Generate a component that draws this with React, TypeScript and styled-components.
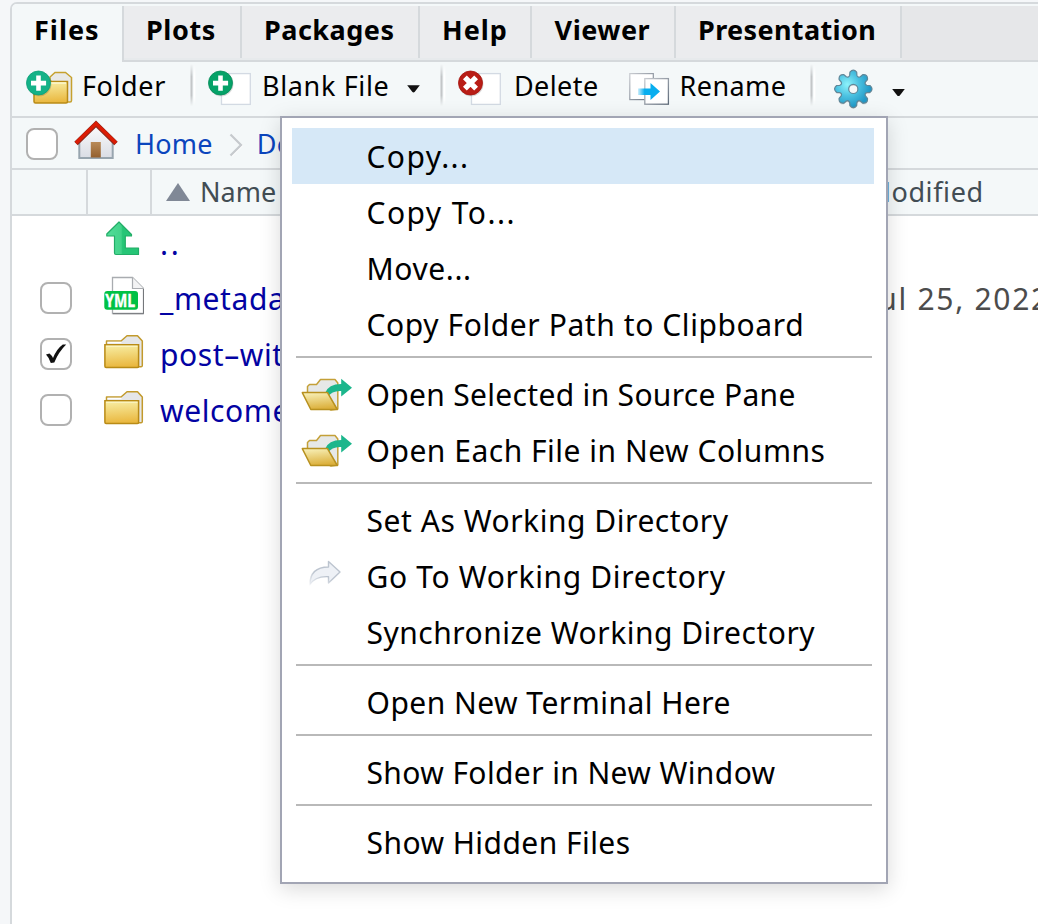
import React from 'react';
import styled, { createGlobalStyle } from 'styled-components';

const Global = createGlobalStyle`
  * { box-sizing: border-box; }
  html, body { margin: 0; padding: 0; overflow: hidden; background: #f5f7f9; }
  body { font-family: 'Noto Sans', 'Open Sans', sans-serif; color: #000; }
  svg { display: block; flex: none; }
`;

const line = '#d5d9dc';
const surface = '#f4f8f9';

const Page = styled.div`
  position: relative;
  width: 1038px;
  height: 924px;
  overflow: hidden;
  padding: 2px 0 0 10px;
`;

const Panel = styled.section`
  width: 1060px;
  height: 940px;
  background: #fff;
  border: 2px solid ${line};
  border-radius: 7px 0 0 0;
  overflow: hidden;
`;

const TabBar = styled.nav`
  display: flex;
  height: 58px;
  background: ${surface};
`;

const Tab = styled.div<{ $w: number; $pad?: number; $track: number; $active?: boolean }>`
  flex: none;
  width: ${p => p.$w}px;
  height: ${p => (p.$active ? 58 : 56)}px;
  margin-top: ${p => (p.$active ? 0 : 2)}px;
  padding-top: ${p => (p.$active ? 2 : 0)}px;
  padding-left: ${p => p.$pad ?? 22}px;
  font-size: 27px;
  font-weight: 700;
  line-height: 47px;
  white-space: nowrap;
  letter-spacing: ${p => p.$track}px;
  background: ${p => (p.$active ? surface : `linear-gradient(#ebecee 52px, #e7eaec 52px, #e7eaec 54px, ${line} 54px)`)};
`;

const TabDivider = styled.div<{ $full?: boolean }>`
  flex: none;
  width: 2px;
  height: 56px;
  margin-top: 2px;
  background: ${p => (p.$full ? line : `linear-gradient(${line} 52px, #e7eaec 52px, #e7eaec 54px, ${line} 54px)`)};
`;

const TabFill = styled.div`
  flex: 1;
  height: 56px;
  margin-top: 2px;
  background: #e6e7e9;
  border-bottom: 2px solid ${line};
`;

const Toolbar = styled.div`
  display: flex;
  height: 56px;
  padding-left: 14px;
  background: ${surface};
  border-bottom: 2px solid ${line};
`;

const ToolButton = styled.div<{ $w: number; $gap: number }>`
  flex: none;
  display: flex;
  width: ${p => p.$w}px;
  gap: ${p => p.$gap}px;
  svg { margin-top: 4px; }
`;

const ToolLabel = styled.span<{ $track: number; $w?: number }>`
  font-size: 27px;
  line-height: 47px;
  white-space: nowrap;
  letter-spacing: ${p => p.$track}px;
  width: ${p => (p.$w ? `${p.$w}px` : 'auto')};
`;

const GearSlot = styled.span`
  padding-left: 6px;
`;

const ToolDivider = styled.div`
  flex: none;
  width: 6px;
  height: 42px;
  margin: 2px 12px 0 0;
  background: linear-gradient(90deg, #d9dcde 0 1px, #c3c6c8 1px 2px, #d9dcde 2px 3px, #f6f9fa 3px 4px, #fff 4px 5px, #f8fafb 5px 6px);
  mask-image: linear-gradient(transparent, #000 30%, #000 75%, transparent);
`;

const Crumbs = styled.div`
  display: flex;
  align-items: center;
  height: 52px;
  padding: 2px 0 0 14px;
  background: ${surface};
  border-bottom: 2px solid ${line};
`;

const Box = styled.span`
  flex: none;
  display: flex;
  align-items: center;
  justify-content: center;
  width: 32px;
  height: 32px;
  border: 2px solid #b1b1b1;
  border-radius: 8px;
  background: #fff;
`;

const HomeSlot = styled.span`
  width: 44px;
  margin: -6px 17px 0 16px;
`;

const Crumb = styled.span`
  font-size: 27px;
  color: #0b45bd;
  letter-spacing: 0.25px;
  line-height: 50px;
`;

const ChevronSlot = styled.span`
  margin: 2px 13px 0 16px;
`;

const Header = styled.div`
  display: flex;
  height: 46px;
  background: ${surface};
  border-bottom: 2px solid ${line};
  color: #424d54;
  font-size: 27px;
  line-height: 44px;
`;

const HeadCell = styled.div<{ $w: number; $line?: boolean }>`
  flex: none;
  display: flex;
  align-items: center;
  width: ${p => p.$w}px;
  border-right: ${p => (p.$line ? `2px solid ${line}` : 'none')};
`;

const SortSlot = styled.span`
  margin: 0 10px 0 14px;
`;

const Modified = styled.span`
  letter-spacing: 0.6px;
`;

const FileRow = styled.div<{ $h?: number }>`
  display: flex;
  align-items: center;
  height: ${p => p.$h ?? 56}px;
  padding-left: 28px;
  font-size: 30px;
  line-height: 54px;
  white-space: nowrap;
`;

const CheckSlot = styled.span`
  flex: none;
  width: 64px;
`;

const IconSlot = styled.span<{ $lift?: number }>`
  flex: none;
  width: 56px;
  padding-bottom: ${p => p.$lift ?? 4}px;
`;

const FileName = styled.span<{ $track?: number }>`
  flex: none;
  width: 708.4px;
  padding-top: 2px;
  color: #0303a3;
  letter-spacing: ${p => p.$track ?? 0.6}px;
`;

const FileDate = styled.span`
  padding-top: 2px;
  color: #4c4c4c;
  letter-spacing: 1.7px;
`;

const Menu = styled.div`
  position: absolute;
  left: 280px;
  top: 116px;
  width: 608px;
  height: 768px;
  padding: 10px 12px 12px 10px;
  background: #fff;
  border: 2px solid #a2a5b4;
  box-shadow: 0 5px 20px rgba(0, 0, 0, 0.15);
`;

const MenuRow = styled.div<{ $on?: boolean; $track: number }>`
  display: flex;
  align-items: center;
  height: 56px;
  padding-top: 2px;
  background: ${p => (p.$on ? '#d6e8f7' : 'transparent')};
  font-size: 30px;
  line-height: 54px;
  white-space: nowrap;
  letter-spacing: ${p => p.$track}px;
`;

const MenuIcon = styled.span`
  flex: none;
  width: 74.5px;
  padding-left: 9px;
`;

const Rule = styled.hr`
  height: 2px;
  margin: 4px 2px 8px 4px;
  border: 0;
  background: #b9b9b9;
`;

const Defs = styled.svg`
  position: absolute;
`;

const Gradients = () => (
  <Defs width="0" height="0">
    <defs>
      <linearGradient id="gold" x1="0" y1="0" x2="0.1" y2="1">
        <stop offset="0" stopColor="#f8efa6" />
        <stop offset="1" stopColor="#eab840" />
      </linearGradient>
      <linearGradient id="goldOpen" x1="0" y1="0" x2="0.2" y2="1">
        <stop offset="0" stopColor="#f9f3bd" />
        <stop offset="1" stopColor="#dcb13e" />
      </linearGradient>
      <linearGradient id="wall" x1="0" y1="0" x2="0" y2="1">
        <stop offset="0" stopColor="#fafafb" />
        <stop offset="1" stopColor="#d9dce4" />
      </linearGradient>
      <linearGradient id="door" x1="0" y1="0" x2="0" y2="1">
        <stop offset="0" stopColor="#b98a58" />
        <stop offset="1" stopColor="#94602f" />
      </linearGradient>
      <linearGradient id="up" x1="0" y1="0" x2="1" y2="0">
        <stop offset="0" stopColor="#52dd9a" />
        <stop offset="0.45" stopColor="#43d38a" />
        <stop offset="0.5" stopColor="#26c576" />
        <stop offset="1" stopColor="#26c576" />
      </linearGradient>
      <linearGradient id="sheet" x1="0" y1="0" x2="1" y2="1">
        <stop offset="0" stopColor="#c9ccd1" />
        <stop offset="1" stopColor="#5f6b7a" />
      </linearGradient>
      <linearGradient id="blueArrow" x1="0" y1="0" x2="1" y2="0">
        <stop offset="0" stopColor="#08aeef" stopOpacity="0.2" />
        <stop offset="0.3" stopColor="#08aeef" />
      </linearGradient>
      <radialGradient id="gear" cx="0.34" cy="0.38" r="0.62">
        <stop offset="0" stopColor="#8df3fb" />
        <stop offset="0.5" stopColor="#4cc2e1" />
        <stop offset="1" stopColor="#2298c6" />
      </radialGradient>
      <linearGradient id="ghost" x1="0" y1="1" x2="0.5" y2="0">
        <stop offset="0" stopColor="#c3cad4" stopOpacity="0.1" />
        <stop offset="0.5" stopColor="#bcc4cf" />
      </linearGradient>
    </defs>
  </Defs>
);

const Plus = ({ color, edge }: { color: string; edge: string }) => (
  <g>
    <circle cx="13.2" cy="18" r="12.3" fill="#000" opacity="0.14" />
    <circle cx="12.5" cy="17" r="12" fill={color} stroke={edge} strokeWidth="0.8" />
    <path d="M10.2 9.5h4.6v5.3h5.3v4.6h-5.3v5.3h-4.6v-5.3H5v-4.6h5.2z" fill="#fff" />
  </g>
);

const NewFolderIcon = () => (
  <svg width="47" height="44" viewBox="0 0 47 44">
    <path d="M24 14V11l5-4.500h10.500l6 5V34.500q0 1.500-1.500 1.500h-3z" fill="#e8e9e8" stroke="#c6a12f" strokeWidth="1.500" />
    <path d="M8 15.500H41.500V35.500q0 1.500-1.500 1.500H9.500Q8 37 8 35.500z" fill="url(#gold)" stroke="#b98b16" strokeWidth="1.500" />
    <path d="M10 17h30" stroke="#fcf8d0" strokeWidth="1.300" />
    <Plus color="#14b288" edge="#0da077" />
  </svg>
);

const Sheet = () => <rect x="13.500" y="7.600" width="28.800" height="30.800" fill="#fff" stroke="#d3dae3" strokeWidth="1.300" />;

const NewFileIcon = () => (
  <svg width="43" height="44" viewBox="0 0 43 44">
    <Sheet />
    <Plus color="#05a268" edge="#068c59" />
  </svg>
);

const DeleteIcon = () => (
  <svg width="43" height="44" viewBox="0 0 43 44">
    <Sheet />
    <circle cx="13.200" cy="18" r="12.300" fill="#000" opacity="0.140" />
    <circle cx="12.500" cy="17" r="12" fill="#b91d16" stroke="#a6150f" strokeWidth="0.800" />
    <path d="M6.900 11.400l11.200 11.200M18.100 11.400L6.900 22.600" stroke="#fff" strokeWidth="5.400" />
  </svg>
);

const RenameIcon = () => (
  <svg width="41" height="44" viewBox="0 0 41 44">
    <rect x="0.800" y="7.600" width="23.500" height="26" fill="#fff" stroke="url(#sheet)" strokeWidth="1.200" />
    <rect x="15.800" y="12.600" width="23.600" height="25.600" fill="#fff" stroke="url(#sheet)" strokeWidth="1.300" />
    <path d="M9 22.500h12.500v-5.500L31 25.500l-9.500 8.500v-5H9z" fill="url(#blueArrow)" />
  </svg>
);

const gearPath = (() => {
  const pts: string[] = [];
  const at = (r: number, deg: number) => {
    const a = (deg * Math.PI) / 180;
    return `${(20 + r * Math.cos(a)).toFixed(2)} ${(20 + r * Math.sin(a)).toFixed(2)}`;
  };
  for (let i = 0; i < 8; i++) {
    const d = i * 45 - 90;
    pts.push(`${i ? 'L' : 'M'}${at(14, d - 15)} L${at(17, d - 11.500)} Q${at(20.800, d)} ${at(17, d + 11.500)} L${at(14, d + 15)} Q${at(12, d + 22.500)} ${at(14, d + 30)}`);
  }
  return `${pts.join(' ')}Z M24.600 20a4.600 4.600 0 1 0-9.200 0a4.600 4.600 0 1 0 9.200 0Z`;
})();

const GearIcon = () => (
  <svg width="40" height="44" viewBox="0 0 40 44">
    <g transform="translate(-0.700 2.900)">
      <path d={gearPath} transform="translate(0 1.200)" fill="#000" opacity="0.200" fillRule="evenodd" />
      <path d={gearPath} fill="url(#gear)" fillRule="evenodd" stroke="#5f8799" strokeWidth="1.200" strokeLinejoin="round" />
    </g>
  </svg>
);

const Caret = ({ top }: { top: number }) => (
  <svg width="13" height="44" viewBox="0 0 13 44">
    <path d={`M0.200 ${top}h12.600l-5 6.500q-1.300 1.200-2.600 0z`} fill="#111" />
  </svg>
);

const HomeIcon = () => (
  <svg width="44" height="42" viewBox="0 0 44 42">
    <path d="M5 22L22 6l17 16v17H5z" fill="url(#wall)" />
    <path d="M5.300 22v16h33.400V22" fill="none" stroke="#98a5af" strokeWidth="2" />
    <path d="M16.800 37.500V22h10v15.500z" fill="url(#door)" />
    <path d="M2 23.500L22 4l20 19.500" fill="none" stroke="#8d2a1c" strokeWidth="5" />
    <path d="M2 23L22 3.500L42 23" fill="none" stroke="#dc1c05" strokeWidth="3.400" />
  </svg>
);

const ChevronIcon = () => (
  <svg width="15" height="26" viewBox="0 0 15 26">
    <path d="M2.500 3.500l10 10-10 10" fill="none" stroke="#fff" strokeWidth="2.500" />
    <path d="M1.500 2.500L12 13 1.500 23.500" fill="none" stroke="#c6cace" strokeWidth="2.300" />
  </svg>
);

const UpIcon = () => (
  <svg width="40" height="38" viewBox="0 0 40 38">
    <path d="M15 2L27.500 14.500V16H21.300v12H34.500v6.500H12q-1.500 0-1.500-1.500V16H2.800v-2z" fill="url(#up)" stroke="#22ad67" strokeWidth="1.200" strokeLinejoin="round" />
  </svg>
);

const YmlLabel = styled.text`
  font-family: 'Open Sans', 'Noto Sans', sans-serif;
  font-size: 18px;
  font-weight: 700;
  letter-spacing: 0;
`;

const YmlIcon = () => (
  <svg width="40" height="42" viewBox="0 0 40 42">
    <path d="M8.500 2.500h20l11 11v25h-31z" fill="#fff" stroke="#a9acb0" strokeWidth="1.300" />
    <path d="M28.500 2.500v11h11" fill="#f3f3f4" stroke="#a9acb0" strokeWidth="1.200" />
    <path d="M9 38.700h30.500V14" fill="none" stroke="#74777b" strokeWidth="1" />
    <rect x="0.300" y="16" width="33.700" height="18.800" rx="3" fill="#00c144" />
    <YmlLabel x="1.200" y="31.600" textLength="30" lengthAdjust="spacingAndGlyphs" fill="#fff" stroke="#fff" strokeWidth="0.400">YML</YmlLabel>
  </svg>
);

const FolderIcon = () => (
  <svg width="40" height="42" viewBox="0 0 40 42">
    <path d="M2.500 16V10H17l6-5.200h10.500L38.300 10v24.500q0 1.300-1.300 1.300H30z" fill="#e5e6e8" stroke="#c29a2c" strokeWidth="1.500" strokeLinejoin="round" />
    <path d="M3.500 11.500h14" stroke="#fff" strokeWidth="1.500" />
    <path d="M0.900 13.800h33.700v21.400q0 1.200-1.200 1.200H2.100q-1.200 0-1.200-1.200z" fill="url(#gold)" stroke="#b98b16" strokeWidth="1.500" />
    <path d="M2 15.200h31.500" stroke="#fcf8d0" strokeWidth="1" />
  </svg>
);

const TickIcon = () => (
  <svg width="24" height="24" viewBox="0 0 24 24">
    <path d="M2 12.500l3.500-1q2.500 2 3.500 4.500Q12.500 7 18.800 2.500h3.400Q14.500 10 10.300 20.500l-3.500.5Q5 15.500 2 12.500z" fill="#111" />
  </svg>
);

const OpenFolderIcon = () => (
  <svg width="52" height="36" viewBox="0 0 52 36">
    <path d="M6.500 19V9.500L8.500 7.500h7l4-5h14.500l2.800 3.500V32L30 33z" fill="#e6e8e7" stroke="#c4a038" strokeWidth="1.500" strokeLinejoin="round" />
    <path d="M24 16Q27.500 7 40.200 7V1.800L51 10.800l-10.800 8.700V14Q31 13.500 26.500 20z" fill="#1cb68c" />
    <path d="M1.300 15.600h25.200l9.800 16.900H9.800z" fill="url(#goldOpen)" stroke="#b8911f" strokeWidth="1.500" strokeLinejoin="round" />
  </svg>
);

const GoToIcon = () => (
  <svg width="52" height="38" viewBox="0 0 52 38">
    <path d="M8.800 27Q9 9 27.500 9V3.500L39 14 27.500 25V18.700Q14 18 8.800 27z" fill="#eef1f6" stroke="url(#ghost)" strokeWidth="1.400" strokeLinejoin="round" />
  </svg>
);

type Entry = { text: string; track: number; icon?: React.ReactNode };

const groups: Entry[][] = [
  [
    { text: 'Copy...', track: 1.4 },
    { text: 'Copy To...', track: 1.45 },
    { text: 'Move...', track: 0.6 },
    { text: 'Copy Folder Path to Clipboard', track: 0.59 },
  ],
  [
    { text: 'Open Selected in Source Pane', track: 0.32, icon: <OpenFolderIcon /> },
    { text: 'Open Each File in New Columns', track: 0.51, icon: <OpenFolderIcon /> },
  ],
  [
    { text: 'Set As Working Directory', track: 0.54 },
    { text: 'Go To Working Directory', track: 0.65, icon: <GoToIcon /> },
    { text: 'Synchronize Working Directory', track: 0.5 },
  ],
  [{ text: 'Open New Terminal Here', track: 0.47 }],
  [{ text: 'Show Folder in New Window', track: 0.39 }],
  [{ text: 'Show Hidden Files', track: 0.45 }],
];

export default function App() {
  return (
    <Page>
      <Global />
      <Gradients />
      <Panel>
        <TabBar>
          <Tab $active $w={110} $pad={22} $track={1}>Files</Tab>
          <TabDivider $full />
          <Tab $w={116} $track={0.6}>Plots</Tab>
          <TabDivider />
          <Tab $w={176} $track={0.5}>Packages</Tab>
          <TabDivider />
          <Tab $w={110} $track={1}>Help</Tab>
          <TabDivider />
          <Tab $w={142} $pad={22.6} $track={0.5}>Viewer</Tab>
          <TabDivider />
          <Tab $w={224} $track={0.37}>Presentation</Tab>
          <TabDivider />
          <TabFill />
        </TabBar>
        <Toolbar>
          <ToolButton $w={164} $gap={9}>
            <NewFolderIcon />
            <ToolLabel $track={0.6}>Folder</ToolLabel>
          </ToolButton>
          <ToolDivider />
          <ToolButton $w={232} $gap={11}>
            <NewFileIcon />
            <ToolLabel $track={0.65} $w={134}>Blank File</ToolLabel>
            <Caret top={19.3} />
          </ToolButton>
          <ToolDivider />
          <ToolButton $w={171} $gap={13}>
            <DeleteIcon />
            <ToolLabel $track={0.4}>Delete</ToolLabel>
          </ToolButton>
          <ToolButton $w={181} $gap={9.6}>
            <RenameIcon />
            <ToolLabel $track={0.4}>Rename</ToolLabel>
          </ToolButton>
          <ToolDivider />
          <ToolButton $w={90} $gap={17.5}>
            <GearSlot><GearIcon /></GearSlot>
            <Caret top={23} />
          </ToolButton>
        </Toolbar>
        <Crumbs>
          <Box />
          <HomeSlot><HomeIcon /></HomeSlot>
          <Crumb>Home</Crumb>
          <ChevronSlot><ChevronIcon /></ChevronSlot>
          <Crumb>Docs</Crumb>
        </Crumbs>
        <Header>
          <HeadCell $w={76} $line />
          <HeadCell $w={64} $line />
          <HeadCell $w={714.4}>
            <SortSlot>
              <svg width="24" height="18" viewBox="0 0 24 18"><path d="M12 0l12 18H0z" fill="#808896" /></svg>
            </SortSlot>
            Name
          </HeadCell>
          <HeadCell $w={180}><Modified>Modified</Modified></HeadCell>
        </Header>
        <FileRow $h={54}>
          <CheckSlot />
          <IconSlot $lift={8}><UpIcon /></IconSlot>
          <FileName $track={2.6}>..</FileName>
        </FileRow>
        <FileRow>
          <CheckSlot><Box /></CheckSlot>
          <IconSlot><YmlIcon /></IconSlot>
          <FileName>_metadata.yml</FileName>
          <FileDate>Jul 25, 2022</FileDate>
        </FileRow>
        <FileRow>
          <CheckSlot><Box><TickIcon /></Box></CheckSlot>
          <IconSlot><FolderIcon /></IconSlot>
          <FileName>post–with-code</FileName>
        </FileRow>
        <FileRow>
          <CheckSlot><Box /></CheckSlot>
          <IconSlot><FolderIcon /></IconSlot>
          <FileName>welcome</FileName>
        </FileRow>
      </Panel>
      <Menu>
        {groups.map((items, g) => (
          <React.Fragment key={g}>
            {g > 0 && <Rule />}
            {items.map((item, i) => (
              <MenuRow key={item.text} $on={g === 0 && i === 0} $track={item.track}>
                <MenuIcon>{item.icon}</MenuIcon>
                {item.text}
              </MenuRow>
            ))}
          </React.Fragment>
        ))}
      </Menu>
    </Page>
  );
}
